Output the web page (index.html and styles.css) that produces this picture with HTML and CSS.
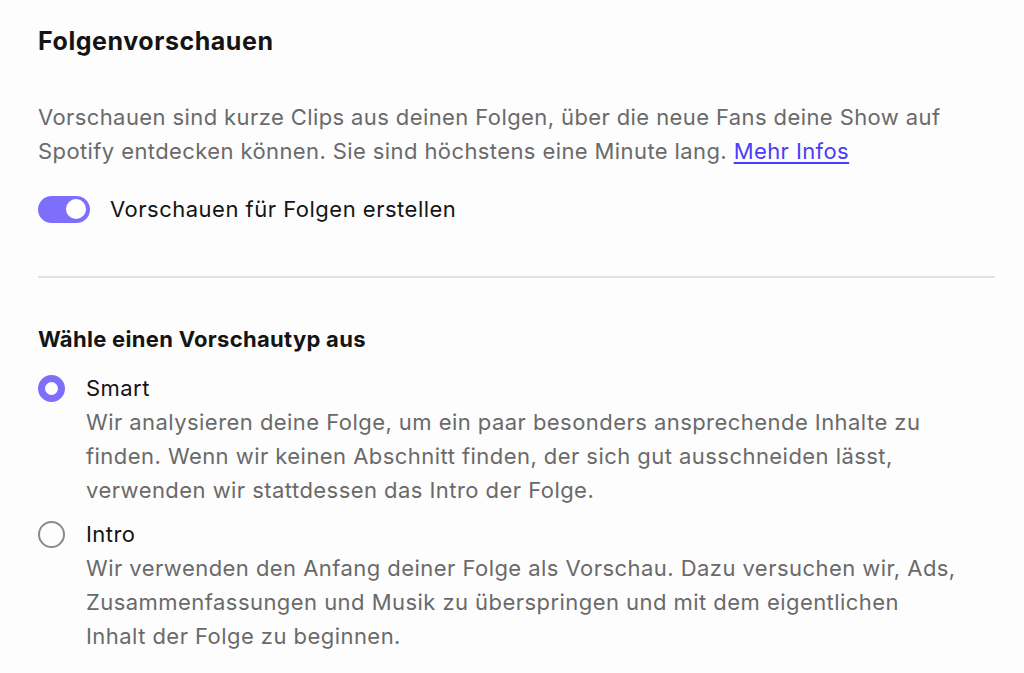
FILE: index.html
```html
<!DOCTYPE html>
<html lang="de">
<head>
    <meta charset="UTF-8">
    <meta name="viewport" content="width=device-width, initial-scale=1.0">
    <title>Folgenvorschauen</title>
    <link rel="stylesheet" href="styles.css">
</head>
<body>
    <div class="container">
        <section class="section">
            <h2 class="section-title">Folgenvorschauen</h2>
            <p class="section-text">
                Vorschauen sind kurze Clips aus deinen Folgen, über die neue Fans deine Show auf<br>
                Spotify entdecken können. Sie sind höchstens eine Minute lang. <a href="#" class="link">Mehr Infos</a>
            </p>
            <label class="toggle-row">
                <span class="toggle"><span class="toggle-knob"></span></span>
                <span class="toggle-label">Vorschauen für Folgen erstellen</span>
            </label>
        </section>

        <hr class="divider">

        <section class="section">
            <h3 class="sub-title">Wähle einen Vorschautyp aus</h3>
            <div class="options">
                <label class="option">
                    <span class="radio radio-checked"></span>
                    <span class="option-body">
                        <span class="option-title">Smart</span>
                        <span class="option-text">Wir analysieren deine Folge, um ein paar besonders ansprechende Inhalte zu<br>finden. Wenn wir keinen Abschnitt finden, der sich gut ausschneiden lässt,<br>verwenden wir stattdessen das Intro der Folge.</span>
                    </span>
                </label>
                <label class="option">
                    <span class="radio"></span>
                    <span class="option-body">
                        <span class="option-title">Intro</span>
                        <span class="option-text">Wir verwenden den Anfang deiner Folge als Vorschau. Dazu versuchen wir, Ads,<br>Zusammenfassungen und Musik zu überspringen und mit dem eigentlichen<br>Inhalt der Folge zu beginnen.</span>
                    </span>
                </label>
            </div>
        </section>
    </div>
</body>
</html>
```

FILE: styles.css
```css
* {
    margin: 0;
    padding: 0;
    box-sizing: border-box;
}

body {
    font-family: 'Inter', 'Noto Sans', sans-serif;
    background: #fdfdfd;
    color: #141414;
}

.container {
    padding: 26px 29px 0 38px;
}

.section-title {
    font-size: 25px;
    font-weight: 700;
    line-height: 30px;
    letter-spacing: 0.55px;
}

.section-text {
    margin-top: 44px;
    font-size: 22px;
    line-height: 34px;
    letter-spacing: 0.4px;
    color: #6a6a6a;
    white-space: nowrap;
}

.link {
    color: #4b3cf7;
    text-decoration: underline;
    text-underline-offset: 3px;
}

.toggle-row {
    display: flex;
    align-items: center;
    gap: 20px;
    margin-top: 24px;
}

.toggle {
    width: 52px;
    height: 27px;
    border-radius: 14px;
    background: #7d6ffb;
    display: flex;
    align-items: center;
    justify-content: flex-end;
    padding: 0 4px;
}

.toggle-knob {
    width: 20px;
    height: 20px;
    border-radius: 50%;
    background: #fff;
}

.toggle-label {
    font-size: 22px;
    line-height: 34px;
    letter-spacing: 0.5px;
}

.divider {
    border: none;
    border-top: 2px solid #e2e2e2;
    margin: 50px 0 46px;
}

.sub-title {
    font-size: 22px;
    font-weight: 700;
    line-height: 30px;
    letter-spacing: 0.3px;
}

.options {
    display: flex;
    flex-direction: column;
    gap: 10px;
    margin-top: 17px;
}

.option {
    display: flex;
    gap: 21px;
}

.radio {
    flex: none;
    width: 27px;
    height: 27px;
    margin-top: 4px;
    border-radius: 50%;
    border: 2px solid #8a8a8a;
}

.radio-checked {
    border: 7px solid #7d6ffb;
}

.option-body {
    display: flex;
    flex-direction: column;
}

.option-title,
.option-text {
    font-size: 22px;
    line-height: 34px;
    letter-spacing: 0.45px;
    white-space: nowrap;
}

.option-text {
    color: #6a6a6a;
}
```
